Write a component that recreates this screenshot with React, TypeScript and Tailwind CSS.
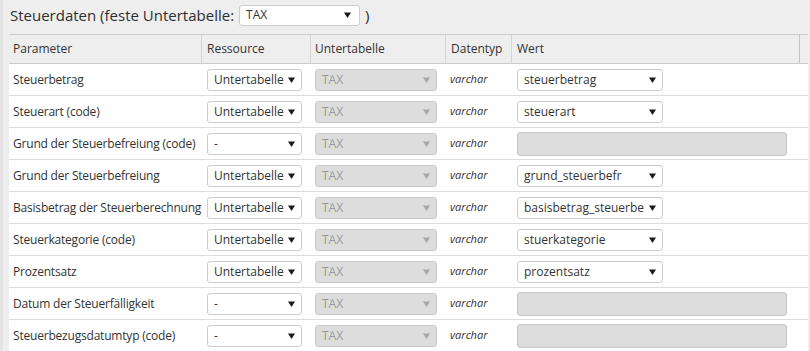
import React from 'react';

type Row = {
  label: string;
  resource: string;
  value?: string;
};

const rows: Row[] = [
  { label: 'Steuerbetrag', resource: 'Untertabelle', value: 'steuerbetrag' },
  { label: 'Steuerart (code)', resource: 'Untertabelle', value: 'steuerart' },
  { label: 'Grund der Steuerbefreiung (code)', resource: '-' },
  { label: 'Grund der Steuerbefreiung', resource: 'Untertabelle', value: 'grund_steuerbefr' },
  { label: 'Basisbetrag der Steuerberechnung', resource: 'Untertabelle', value: 'basisbetrag_steuerbe' },
  { label: 'Steuerkategorie (code)', resource: 'Untertabelle', value: 'stuerkategorie' },
  { label: 'Prozentsatz', resource: 'Untertabelle', value: 'prozentsatz' },
  { label: 'Datum der Steuerfälligkeit', resource: '-' },
  { label: 'Steuerbezugsdatumtyp (code)', resource: '-' },
];

const Caret: React.FC<{ disabled?: boolean }> = ({ disabled }) => (
  <svg width="7" height="6" viewBox="0 0 7 6" className="shrink-0">
    <path d="M0 0.5 L7 0.5 L3.5 6 Z" fill={disabled ? '#a8a8a8' : '#1a1a1a'} />
  </svg>
);

const FakeSelect: React.FC<{ value: string; width: string; disabled?: boolean }> = ({ value, width, disabled }) => (
  <div
    className={`${width} h-[22px] flex items-center justify-between gap-[3px] pl-[6px] pr-[6px] rounded-[3px] border ${
      disabled ? 'bg-[#dddddd] border-[#c8c8c8] text-[#9a9a9a]' : 'bg-white border-[#cccccc] text-[#333333]'
    }`}
  >
    <span className="whitespace-nowrap leading-[16px]">{value}</span>
    <Caret disabled={disabled} />
  </div>
);

export default function App() {
  return (
    <div className="w-[810px] h-[351px] overflow-hidden bg-[#eeeeee] flex font-['Open_Sans',sans-serif] text-[12px] text-[#333333]">
      <div className="w-[3px] shrink-0 bg-[#e3e3e3]" />
      <div className="flex-1 pl-[6px] pr-[2px]">
        <div className="h-[34px] flex items-center gap-[5px] pl-[1px] pb-[4px] text-[15px] font-medium text-[#2e2e2e]">
          <span>Steuerdaten (feste Untertabelle:</span>
          <div className="w-[121px] h-[21px] flex items-center justify-between pl-[6px] pr-[8px] bg-white border border-[#cccccc] rounded-[3px] text-[12px] font-normal text-[#333333]">
            <span className="leading-[16px]">TAX</span>
            <Caret />
          </div>
          <span>)</span>
        </div>

        <div className="grid grid-cols-[193px_109px_135px_66px_288px_8px] h-[30px] border-t border-b border-[#cccccc] bg-[#eeeeee]">
          <div className="flex items-center pl-[4px] border-r border-[#d4d4d4]">Parameter</div>
          <div className="flex items-center pl-[5px] border-r border-[#d4d4d4]">Ressource</div>
          <div className="flex items-center pl-[4px] border-r border-[#d4d4d4]">Untertabelle</div>
          <div className="flex items-center pl-[5px] border-r border-[#d4d4d4]">Datentyp</div>
          <div className="flex items-center pl-[5px] border-r border-[#c4c4c4]">Wert</div>
          <div />
        </div>

        {rows.map((r) => (
          <div
            key={r.label}
            className="grid grid-cols-[193px_109px_135px_66px_288px_8px] h-[32px] bg-white border-b border-[#dddddd] items-center"
          >
            <div className="pl-[4px] whitespace-nowrap tracking-[-0.2px]">{r.label}</div>
            <div className="pl-[5px]">
              <FakeSelect value={r.resource} width="w-[95px]" />
            </div>
            <div className="pl-[4px]">
              <FakeSelect value="TAX" width="w-[122px]" disabled />
            </div>
            <div className="pl-[4px] italic text-[11px] text-[#333333]">varchar</div>
            <div className="pl-[5px]">
              {r.value ? (
                <FakeSelect value={r.value} width="w-[146px]" />
              ) : (
                <div className="w-[270px] h-[24px] bg-[#dddddd] border border-[#c8c8c8] rounded-[3px]" />
              )}
            </div>
            <div />
          </div>
        ))}
      </div>
    </div>
  );
}
